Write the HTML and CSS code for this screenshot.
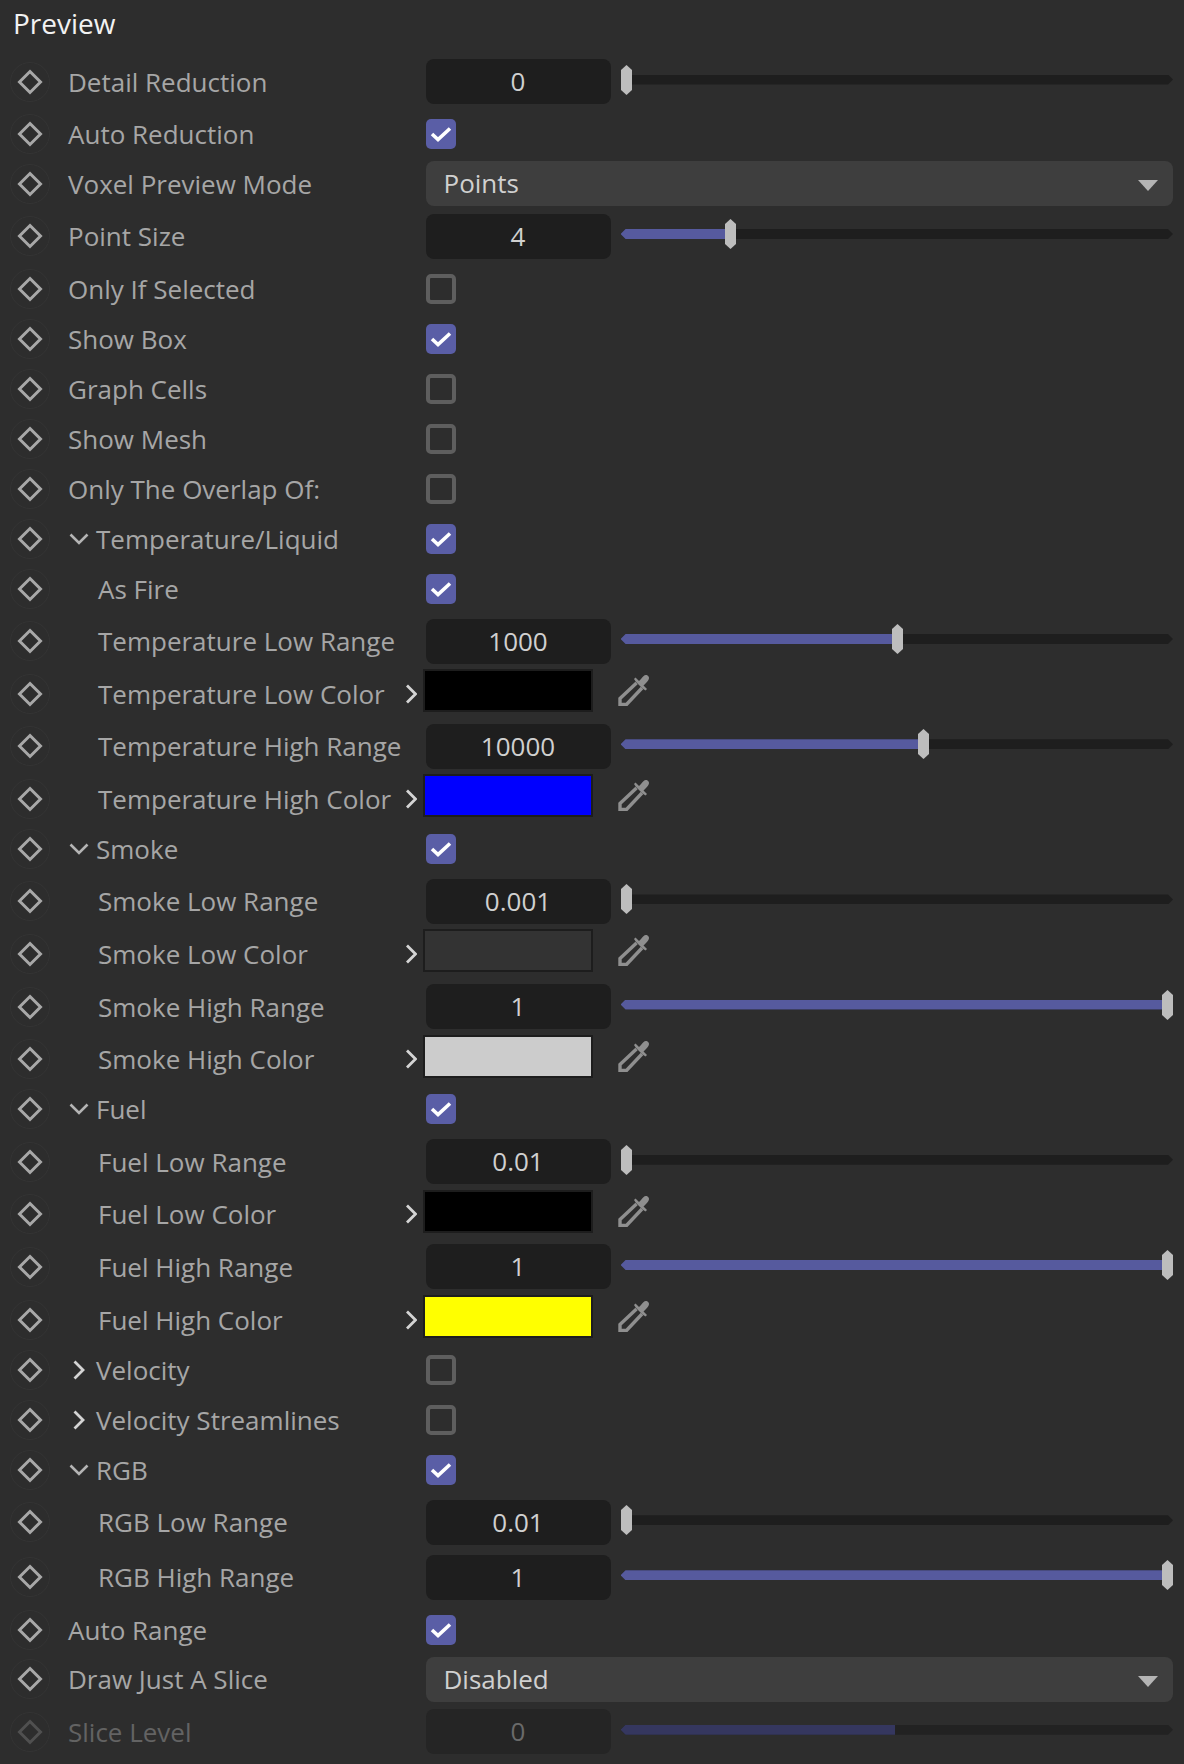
FILE: index.html
```html
<!DOCTYPE html>
<html lang="en">
<head>
<meta charset="utf-8">
<title>Preview</title>
<link rel="stylesheet" href="styles.css">
</head>
<body>
<svg class="defs" width="0" height="0" aria-hidden="true">
  <symbol id="dia" viewBox="0 0 40 40"><circle cx="20" cy="20" r="19.5" fill="none" stroke="#343434"/><path d="M20 9.5 30.5 20 20 30.5 9.5 20Z" fill="none" stroke="currentColor" stroke-width="3"/></symbol>
  <symbol id="tick" viewBox="0 0 30 30"><path d="M6 15 12 20.5 24 9.5" fill="none" stroke="#fff" stroke-width="3.6"/></symbol>
  <symbol id="down" viewBox="0 0 20 12"><path d="M1.5 1.5 10 10 18.5 1.5" fill="none" stroke="#b4b4b4" stroke-width="2.6"/></symbol>
  <symbol id="right" viewBox="0 0 12 20"><path d="M2 1.5 10.500 10 2 18.500" fill="none" stroke="#d4d4d4" stroke-width="2.800"/></symbol>
  <symbol id="drop" viewBox="0 0 32 32"><path d="M18.500 9 2 24.500V30.500H8.500L24 14" fill="none" stroke="#8f8f8f" stroke-width="3.400"/><path d="M16 5 17.500 3.500 29 15 27.500 16.500 24.500 14.500 18 8Z" fill="#8f8f8f"/><path d="M19.500 8.500 23 5C25 2.500 27 0 29.500 1.500 32.500 3.500 30.500 6.500 28 9L24.500 12.500Z" fill="#8f8f8f"/></symbol>
  <symbol id="handle" viewBox="0 0 11 30"><path d="M5.500 0 11 5V25L5.500 30 0 25V5Z" fill="#bdbdbd"/></symbol>
</svg>
<main class="panel">
<h1 class="title">Preview</h1>

<div class="row row-val"><svg class="dia"><use href="#dia"/></svg><span class="label">Detail Reduction</span><div class="field">0</div><div class="slider"><div class="track"></div><svg class="handle" style="left:0"><use href="#handle"/></svg></div></div>
<div class="row row-chk"><svg class="dia"><use href="#dia"/></svg><span class="label">Auto Reduction</span><span class="chk on"><svg><use href="#tick"/></svg></span></div>
<div class="row row-drop"><svg class="dia"><use href="#dia"/></svg><span class="label">Voxel Preview Mode</span><div class="select">Points<span class="caret"></span></div></div>
<div class="row row-val"><svg class="dia"><use href="#dia"/></svg><span class="label">Point Size</span><div class="field">4</div><div class="slider"><div class="track"><i class="fill" style="width:108px"></i></div><svg class="handle" style="left:104px"><use href="#handle"/></svg></div></div>
<div class="row row-chk"><svg class="dia"><use href="#dia"/></svg><span class="label">Only If Selected</span><span class="chk"></span></div>
<div class="row row-chk"><svg class="dia"><use href="#dia"/></svg><span class="label">Show Box</span><span class="chk on"><svg><use href="#tick"/></svg></span></div>
<div class="row row-chk"><svg class="dia"><use href="#dia"/></svg><span class="label">Graph Cells</span><span class="chk"></span></div>
<div class="row row-chk"><svg class="dia"><use href="#dia"/></svg><span class="label">Show Mesh</span><span class="chk"></span></div>
<div class="row row-chk"><svg class="dia"><use href="#dia"/></svg><span class="label">Only The Overlap Of:</span><span class="chk"></span></div>

<div class="row row-chk"><svg class="dia"><use href="#dia"/></svg><span class="label group"><svg class="tw"><use href="#down"/></svg>Temperature/Liquid</span><span class="chk on"><svg><use href="#tick"/></svg></span></div>
<div class="row row-chk"><svg class="dia"><use href="#dia"/></svg><span class="label sub">As Fire</span><span class="chk on"><svg><use href="#tick"/></svg></span></div>
<div class="row row-val"><svg class="dia"><use href="#dia"/></svg><span class="label sub">Temperature Low Range</span><div class="field">1000</div><div class="slider"><div class="track"><i class="fill" style="width:275px"></i></div><svg class="handle" style="left:271px"><use href="#handle"/></svg></div></div>
<div class="row row-col"><svg class="dia"><use href="#dia"/></svg><span class="label sub">Temperature Low Color</span><svg class="more"><use href="#right"/></svg><span class="swatch c-black"></span><svg class="drop"><use href="#drop"/></svg></div>
<div class="row row-val"><svg class="dia"><use href="#dia"/></svg><span class="label sub">Temperature High Range</span><div class="field">10000</div><div class="slider"><div class="track"><i class="fill" style="width:301px"></i></div><svg class="handle" style="left:297px"><use href="#handle"/></svg></div></div>
<div class="row row-col"><svg class="dia"><use href="#dia"/></svg><span class="label sub">Temperature High Color</span><svg class="more"><use href="#right"/></svg><span class="swatch c-blue"></span><svg class="drop"><use href="#drop"/></svg></div>

<div class="row row-chk"><svg class="dia"><use href="#dia"/></svg><span class="label group"><svg class="tw"><use href="#down"/></svg>Smoke</span><span class="chk on"><svg><use href="#tick"/></svg></span></div>
<div class="row row-val"><svg class="dia"><use href="#dia"/></svg><span class="label sub">Smoke Low Range</span><div class="field">0.001</div><div class="slider"><div class="track"></div><svg class="handle" style="left:0"><use href="#handle"/></svg></div></div>
<div class="row row-col"><svg class="dia"><use href="#dia"/></svg><span class="label sub">Smoke Low Color</span><svg class="more"><use href="#right"/></svg><span class="swatch c-dark"></span><svg class="drop"><use href="#drop"/></svg></div>
<div class="row row-val"><svg class="dia"><use href="#dia"/></svg><span class="label sub">Smoke High Range</span><div class="field">1</div><div class="slider"><div class="track"><i class="fill" style="width:547px"></i></div><svg class="handle" style="left:541px"><use href="#handle"/></svg></div></div>
<div class="row row-col"><svg class="dia"><use href="#dia"/></svg><span class="label sub">Smoke High Color</span><svg class="more"><use href="#right"/></svg><span class="swatch c-light"></span><svg class="drop"><use href="#drop"/></svg></div>

<div class="row row-chk"><svg class="dia"><use href="#dia"/></svg><span class="label group"><svg class="tw"><use href="#down"/></svg>Fuel</span><span class="chk on"><svg><use href="#tick"/></svg></span></div>
<div class="row row-val"><svg class="dia"><use href="#dia"/></svg><span class="label sub">Fuel Low Range</span><div class="field">0.01</div><div class="slider"><div class="track"></div><svg class="handle" style="left:0"><use href="#handle"/></svg></div></div>
<div class="row row-col"><svg class="dia"><use href="#dia"/></svg><span class="label sub">Fuel Low Color</span><svg class="more"><use href="#right"/></svg><span class="swatch c-black"></span><svg class="drop"><use href="#drop"/></svg></div>
<div class="row row-val"><svg class="dia"><use href="#dia"/></svg><span class="label sub">Fuel High Range</span><div class="field">1</div><div class="slider"><div class="track"><i class="fill" style="width:547px"></i></div><svg class="handle" style="left:541px"><use href="#handle"/></svg></div></div>
<div class="row row-col"><svg class="dia"><use href="#dia"/></svg><span class="label sub">Fuel High Color</span><svg class="more"><use href="#right"/></svg><span class="swatch c-yellow"></span><svg class="drop"><use href="#drop"/></svg></div>

<div class="row row-chk"><svg class="dia"><use href="#dia"/></svg><span class="label group"><svg class="tw tw-r"><use href="#right"/></svg>Velocity</span><span class="chk"></span></div>
<div class="row row-chk"><svg class="dia"><use href="#dia"/></svg><span class="label group"><svg class="tw tw-r"><use href="#right"/></svg>Velocity Streamlines</span><span class="chk"></span></div>
<div class="row row-chk"><svg class="dia"><use href="#dia"/></svg><span class="label group"><svg class="tw"><use href="#down"/></svg>RGB</span><span class="chk on"><svg><use href="#tick"/></svg></span></div>
<div class="row row-val"><svg class="dia"><use href="#dia"/></svg><span class="label sub">RGB Low Range</span><div class="field">0.01</div><div class="slider"><div class="track"></div><svg class="handle" style="left:0"><use href="#handle"/></svg></div></div>
<div class="row row-val"><svg class="dia"><use href="#dia"/></svg><span class="label sub">RGB High Range</span><div class="field">1</div><div class="slider"><div class="track"><i class="fill" style="width:547px"></i></div><svg class="handle" style="left:541px"><use href="#handle"/></svg></div></div>
<div class="row row-chk"><svg class="dia"><use href="#dia"/></svg><span class="label">Auto Range</span><span class="chk on"><svg><use href="#tick"/></svg></span></div>
<div class="row row-drop"><svg class="dia"><use href="#dia"/></svg><span class="label">Draw Just A Slice</span><div class="select">Disabled<span class="caret"></span></div></div>
<div class="row row-val disabled"><svg class="dia"><use href="#dia"/></svg><span class="label">Slice Level</span><div class="field">0</div><div class="slider"><div class="track"><i class="fill" style="width:274px"></i></div></div></div>
</main>
</body>
</html>
```
FILE: styles.css
```css
* { box-sizing: border-box; }
html, body { margin: 0; padding: 0; }
body {
  width: 1184px;
  height: 1764px;
  overflow: hidden;
  background: #2d2d2d;
  font-family: "Open Sans", "Noto Sans", sans-serif;
  font-size: 26px;
  color: #a6a6a6;
}
.defs { position: absolute; }
.panel { padding: 0 11px 0 0; }
.title {
  margin: 0;
  padding: 5px 0 0 13px;
  height: 54px;
  font-size: 28px;
  font-weight: 400;
  line-height: 36px;
  color: #f2f2f2;
}
.row {
  display: flex;
  align-items: center;
  color: #a6a6a6;
}
.row-val { height: 55px; }
.row-chk { height: 50px; }
.row-drop { height: 49.5px; }
.row-col { height: 50.2px; }
.dia {
  flex: none;
  width: 40px;
  height: 40px;
  margin: 0 18px 0 10px;
  color: #a8a8a8;
}
.label {
  flex: none;
  width: 357.500px;
  white-space: nowrap;
  display: flex;
  align-items: center;
}
.sub { padding-left: 30px; }
.tw {
  flex: none;
  width: 20px;
  height: 12px;
  margin: 0 7px 0 1px;
}
.tw-r { width: 13px; height: 20px; margin: 0 11px 0 4px; }
.field {
  flex: none;
  width: 185px;
  height: 45px;
  border-radius: 8px;
  background: #1e1e1e;
  color: #d0d0d0;
  text-align: center;
  line-height: 44px;
}
.slider {
  position: relative;
  flex: 1;
  height: 10px;
  margin: -4px 0 0 10px;
}
.track {
  height: 100%;
  background: #1e1e1e;
  clip-path: polygon(5px 0, calc(100% - 5px) 0, 100% 50%, calc(100% - 5px) 100%, 5px 100%, 0 50%);
}
.fill {
  display: block;
  height: 100%;
  background: #565a9e;
}
.handle {
  position: absolute;
  top: -10px;
  width: 11px;
  height: 30px;
}
.chk {
  flex: none;
  display: block;
  width: 30px;
  height: 30px;
  border-radius: 5px;
  border: 4px solid #5e5e5e;
  background: #2d2d2d;
}
.chk.on {
  border: 0;
  background: #5a5ea6;
}
.chk svg { display: block; width: 30px; height: 30px; }
.more {
  flex: none;
  width: 12px;
  height: 20px;
  margin: 0 6px 0 -21px;
}
.swatch {
  flex: none;
  align-self: flex-start;
  width: 170px;
  height: 43px;
  border: 2px solid #1d1d1d;
  margin-top: 0.5px;
}
.c-black { background: #000; }
.c-blue { background: #00f; }
.c-dark { background: #333; }
.c-light { background: #ccc; }
.c-yellow { background: #ff0; }
.drop {
  flex: none;
  align-self: flex-start;
  width: 32px;
  height: 32px;
  margin: 5.500px 0 0 25px;
}
.select {
  position: relative;
  flex: 1;
  height: 45px;
  padding-left: 18px;
  border-radius: 8px;
  background: #3e3e3e;
  color: #d0d0d0;
  line-height: 44px;
}
.caret {
  position: absolute;
  right: 15px;
  top: 19px;
  width: 0;
  height: 0;
  border-left: 10px solid transparent;
  border-right: 10px solid transparent;
  border-top: 11px solid #b4b4b4;
}
.disabled .label { color: #636363; }
.disabled .dia { color: #505050; }
.disabled .field { background: #252525; color: #6a6a6a; }
.disabled .track { background: #222; }
.disabled .fill { background: #35375f; }
```
